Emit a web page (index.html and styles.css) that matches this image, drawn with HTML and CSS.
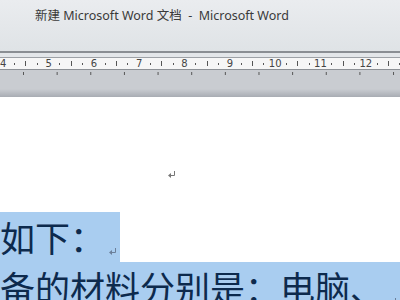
FILE: index.html
```html
<!DOCTYPE html>
<html lang="zh-CN">
<head>
    <meta charset="UTF-8">
    <title>新建 Microsoft Word 文档 - Microsoft Word</title>
    <link rel="stylesheet" href="styles.css">
</head>
<body>
    <div class="titlebar">
        <span class="title">新建 Microsoft Word 文档 &nbsp;-&nbsp; Microsoft Word</span>
    </div>
    <div class="ribbon-edge"></div>
    <div class="ruler-area">
        <div class="ruler">
            <div class="ruler-row">
                <div class="unit"><span class="num">4</span><span class="dot"></span><span class="half"></span><span class="dot"></span></div>
                <div class="unit"><span class="num">5</span><span class="dot"></span><span class="half"></span><span class="dot"></span></div>
                <div class="unit"><span class="num">6</span><span class="dot"></span><span class="half"></span><span class="dot"></span></div>
                <div class="unit"><span class="num">7</span><span class="dot"></span><span class="half"></span><span class="dot"></span></div>
                <div class="unit"><span class="num">8</span><span class="dot"></span><span class="half"></span><span class="dot"></span></div>
                <div class="unit"><span class="num">9</span><span class="dot"></span><span class="half"></span><span class="dot"></span></div>
                <div class="unit"><span class="num">10</span><span class="dot"></span><span class="half"></span><span class="dot"></span></div>
                <div class="unit"><span class="num">11</span><span class="dot"></span><span class="half"></span><span class="dot"></span></div>
                <div class="unit"><span class="num">12</span><span class="dot"></span><span class="half"></span><span class="dot"></span></div>
            </div>
        </div>
        <div class="tabstops"></div>
    </div>

    <div class="page">
        <div class="empty-para">
            <svg class="pilcrow" width="8" height="7" viewBox="0 0 8 7">
                <path d="M6.5 0 V4.5 H1" fill="none" stroke="#777" stroke-width="1"/>
                <path d="M0 4.5 L3 2 V7 Z" fill="#777"/>
            </svg>
        </div>
        <p class="line short">如下：<span class="mark"><svg width="8" height="7" viewBox="0 0 8 7"><path d="M6.5 0 V4.5 H1" fill="none" stroke="#6b7f99" stroke-width="1"/><path d="M0 4.5 L3 2 V7 Z" fill="#6b7f99"/></svg></span></p>
        <p class="line full">备的材料分别是：电脑、<span class="mark"><svg width="8" height="7" viewBox="0 0 8 7"><path d="M6.5 0 V4.5 H1" fill="none" stroke="#6b7f99" stroke-width="1"/><path d="M0 4.5 L3 2 V7 Z" fill="#6b7f99"/></svg></span></p>
    </div>
</body>
</html>
```

FILE: styles.css
```css
body {
    margin: 0;
    width: 400px;
    height: 300px;
    overflow: hidden;
    background-color: #ffffff;
    font-family: "Noto Sans", "Noto Sans CJK SC", sans-serif;
}
.titlebar {
    height: 51px;
    background: linear-gradient(#eaecef, #dfe3e6);
    box-sizing: border-box;
    padding: 3px 0 0 35px;
}
.title {
    font-size: 12.5px;
    color: #3a3a3a;
}
.ribbon-edge {
    height: 2px;
    background-color: #8a8e93;
}
.ruler-area {
    height: 44px;
    box-sizing: border-box;
    padding-top: 4px;
    background: linear-gradient(#e3e6e9 0, #e3e6e9 4px, #c9ccd1 4px, #c9ccd1 36px, #a8acb3 44px);
}
.ruler {
    height: 11px;
    background-color: #f6f6f6;
    border-top: 1px solid #9da1a6;
    border-bottom: 1px solid #8d9196;
    overflow: hidden;
}
.ruler-row {
    display: flex;
    margin-left: -2.4px;
}
.unit {
    display: grid;
    grid-template-columns: repeat(4, 11.333px);
    align-items: center;
    justify-items: center;
    height: 11px;
    flex: none;
}
.num {
    font-family: "DejaVu Sans", sans-serif;
    font-size: 10px;
    line-height: 11px;
    color: #444;
}
.dot {
    width: 1px;
    height: 2px;
    background-color: #555;
}
.half {
    width: 1px;
    height: 5px;
    background-color: #555;
}
.tabstops {
    height: 3px;
    margin-top: 2px;
    background-image: linear-gradient(to right, #555 1px, transparent 1px);
    background-size: 33.65px 3px;
    background-position: 23px 0;
    background-repeat: repeat-x;
}
.page {
    background-color: #ffffff;
}
.empty-para {
    height: 115px;
    box-sizing: border-box;
    padding: 74px 0 0 168px;
}
.pilcrow {
    display: block;
}
.line {
    margin: 0;
    height: 50px;
    line-height: 50px;
    font-size: 35px;
    color: #0d2a4d;
    background-color: #a9cdf0;
    white-space: nowrap;
    font-family: "Noto Sans CJK SC", sans-serif;
}
.short {
    width: 120px;
}
.mark {
    display: inline-block;
    width: 15px;
    padding-left: 4px;
    line-height: 0;
    vertical-align: -3px;
}
```
